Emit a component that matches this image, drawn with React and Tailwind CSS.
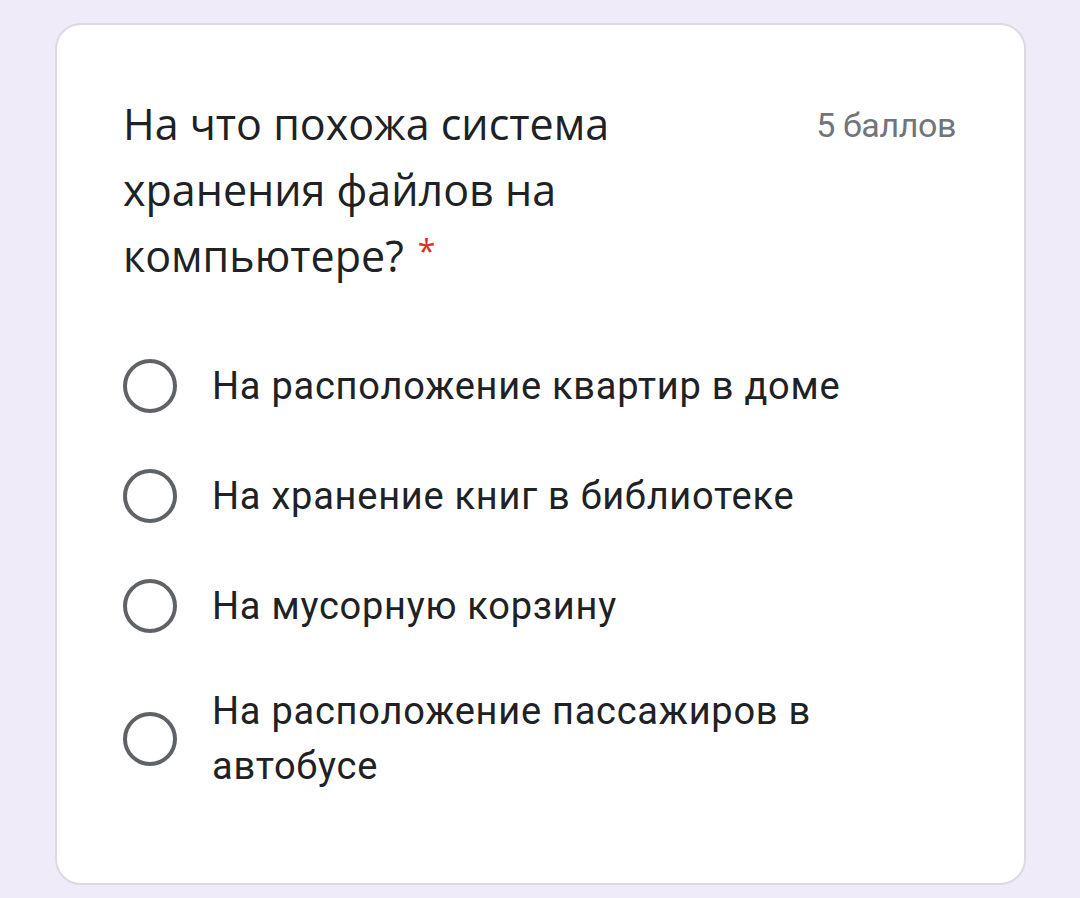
export default function App() {
  const options = [
    "На расположение квартир в доме",
    "На хранение книг в библиотеке",
    "На мусорную корзину",
    "На расположение пассажиров в автобусе",
  ];

  return (
    <div className="min-h-[898px] w-[1080px] bg-[#efebf8] pt-[23px] pl-[55px]">
      <div className="w-[971px] h-[862px] bg-white border-2 border-[#dcdae0] rounded-[26px] pl-[66px] pr-[68px] pt-[66px]">
        <div className="flex justify-between items-start">
          <div
            className="w-[560px] text-[43px] leading-[66px] text-[#202124]"
            style={{ fontFamily: '"Open Sans", sans-serif' }}
          >
            На что похожа система хранения файлов на компьютере?
            <span className="inline-block align-top ml-[14px] mt-[12px] text-[32px] leading-[32px] text-[#d93025]">*</span>
          </div>
          <div
            className="text-[34px] tracking-[-0.4px] leading-[66px] text-[#70757a] pt-[1px]"
            style={{ fontFamily: "Roboto, sans-serif" }}
          >
            5 баллов
          </div>
        </div>

        <div className="mt-[42px] flex flex-col" style={{ fontFamily: "Roboto, sans-serif" }}>
          {options.map((o) => (
            <div key={o} className="flex items-center min-h-[110px] py-[23px]">
              <div className="w-[54px] h-[54px] rounded-full border-[4px] border-[#5f6368] shrink-0" />
              <div className="ml-[35px] w-[640px] text-[38px] leading-[55px] tracking-[0.75px] text-[#202124]">
                {o}
              </div>
            </div>
          ))}
        </div>
      </div>
    </div>
  );
}
